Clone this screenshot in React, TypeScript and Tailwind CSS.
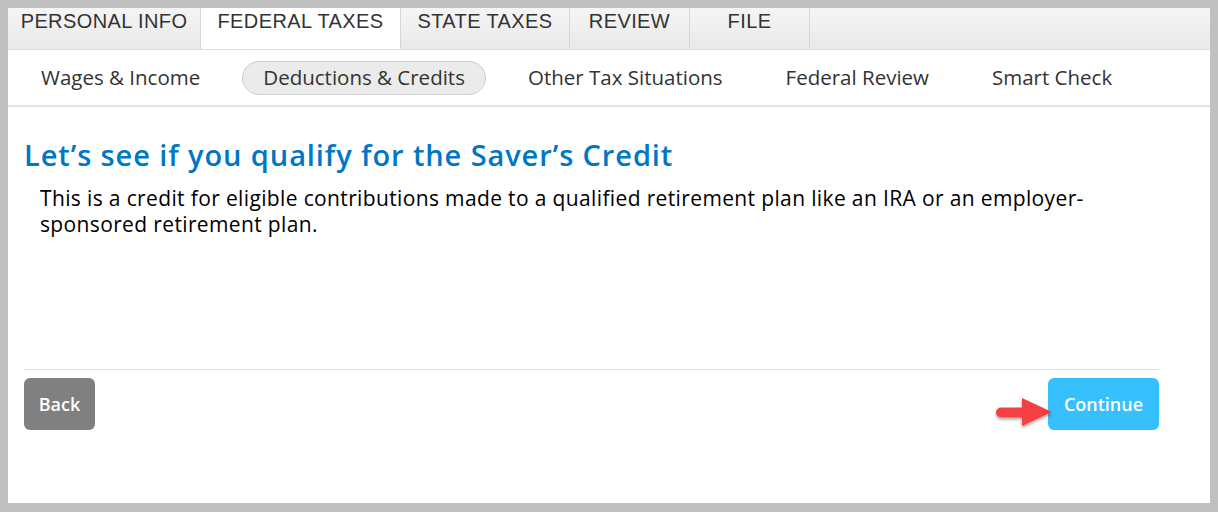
const tabs = [
	{ label: "PERSONAL INFO", w: "w-[193px]", active: false },
	{ label: "FEDERAL TAXES", w: "w-[200px]", active: true },
	{ label: "STATE TAXES", w: "w-[169px]", active: false },
	{ label: "REVIEW", w: "w-[120px]", active: false },
	{ label: "FILE", w: "w-[120px]", active: false },
];

const subNav = [
	{ label: "Wages & Income", active: false },
	{ label: "Deductions & Credits", active: true },
	{ label: "Other Tax Situations", active: false },
	{ label: "Federal Review", active: false },
	{ label: "Smart Check", active: false },
];

const body = { fontFamily: "'Open Sans', sans-serif" };

function Arrow() {
	return (
		<svg
			className="absolute left-[-54px] top-[17px]"
			width="60"
			height="36"
			viewBox="0 0 60 36"
		>
			<defs>
				<filter id="sh" x="-20%" y="-30%" width="140%" height="170%">
					<feDropShadow dx="0" dy="2" stdDeviation="1.5" floodColor="#000" floodOpacity="0.35" />
				</filter>
			</defs>
			<g filter="url(#sh)">
				<path d="M7 12.5 H28 V3 L58 17 L28 31 V22.5 H7 A5 5 0 0 1 7 12.5 Z" fill="#f44142" />
			</g>
		</svg>
	);
}

export default function App() {
	return (
		<div className="h-[512px] w-[1218px] bg-[#c0c0c0] pt-2 pl-2 pr-2 pb-[9px]">
			<div className="flex h-full flex-col bg-white">
				<div className="flex h-[42px] border-b border-[#dcdcdc] bg-gradient-to-b from-[#f5f5f5] to-[#e9e9e9]">
					{tabs.map((t) => (
						<div
							key={t.label}
							className={`${t.w} border-r border-[#d6d6d6] text-center text-[20px] leading-[26px] tracking-[0.4px] text-[#333] ${t.active ? "bg-white" : ""}`}
							style={{ fontFamily: "'Liberation Sans', Arial, sans-serif" }}
						>
							{t.label}
						</div>
					))}
				</div>
				<div className="flex h-[57px] items-center gap-[21px] border-b-2 border-[#e2e2e2] pl-3" style={body}>
					{subNav.map((s) => (
						<div
							key={s.label}
							className={`flex h-[34px] items-center rounded-full px-5 text-[20.5px] text-[#333] ${s.active ? "border border-[#cfcfcf] bg-[#ebebeb]" : "border border-transparent"}`}
						>
							{s.label}
						</div>
					))}
				</div>
				<div className="flex flex-1 flex-col pl-4 pr-[51px] pb-[73px]" style={body}>
					<h1 className="mt-[30px] text-[29px] font-semibold leading-[36px] tracking-[0.9px] text-[#0077c5]">
						Let’s see if you qualify for the Saver’s Credit
					</h1>
					<p className="mt-[12px] pl-4 pr-4 text-[21px] leading-[26px] tracking-[0.36px] text-black">
						This is a credit for eligible contributions made to a qualified
						retirement plan like an IRA or an employer-sponsored retirement plan.
					</p>
					<div className="flex-1" />
					<div className="border-t border-[#d5e2e8]" />
					<div className="mt-2 flex items-center justify-between">
						<button className="h-[52px] w-[71px] rounded-md bg-[#808080] text-[18px] font-semibold text-white">
							Back
						</button>
						<div className="relative">
							<Arrow />
							<button className="h-[52px] w-[111px] rounded-md bg-[#36c0fe] text-[18px] font-semibold text-white">
								Continue
							</button>
						</div>
					</div>
				</div>
			</div>
		</div>
	);
}
